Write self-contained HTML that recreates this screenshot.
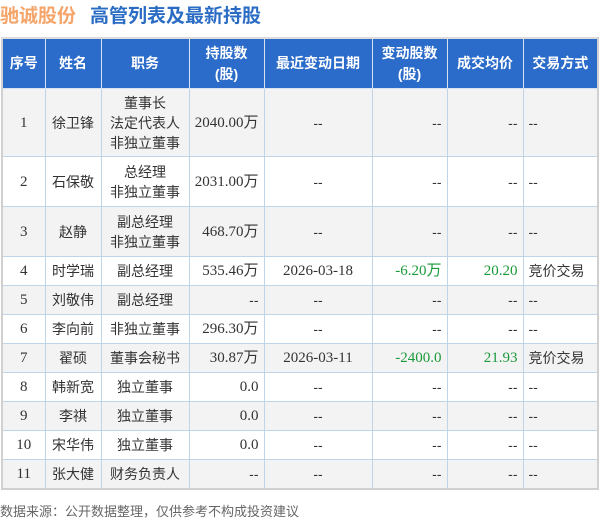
<!DOCTYPE html><html><head><meta charset="utf-8"><style>
body{margin:0;width:600px;height:519px;background:#fff;font-family:"Liberation Sans","Noto Sans CJK SC",sans-serif;position:relative;overflow:hidden}
.t1{position:absolute;left:0;top:1px;font-size:19px;font-weight:bold;color:#f5a46a}
.t2{position:absolute;left:90px;top:1px;font-size:19px;font-weight:bold;color:#2a6cc4}
table{position:absolute;left:1px;top:37px;border-collapse:collapse;border:2px solid #d0d0d0;border-top:2px solid #ddd;table-layout:fixed;font-size:14px;color:#333}
th{background:#2b6bc9;color:#fff;font-weight:bold;border:1px solid #d6e2ef;height:49px;font-size:14px;line-height:21px;padding:0}
td{border:1px solid #c0d4e8;padding:0 5px;text-align:center;height:28px;line-height:20px}
tr.g td{background:#f3f3f3}
.r{text-align:right}.l{text-align:left}.gr{color:#1a9a3a}
.s{font-family:"Liberation Serif","Noto Sans CJK SC",serif;font-size:15px}
.f{position:absolute;left:0;top:501px;font-size:13px;color:#666}
</style></head><body>
<div class="t1">驰诚股份</div><div class="t2">高管列表及最新持股</div>
<table>
<colgroup><col width="43"><col width="56"><col width="88"><col width="75"><col width="108"><col width="75"><col width="76"><col width="75"></colgroup>
<tr><th>序号</th><th>姓名</th><th>职务</th><th>持股数<br>(股)</th><th>最近变动日期</th><th>变动股数<br>(股)</th><th>成交均价</th><th>交易方式</th></tr>
<tr class="g"><td class="s" style="height:67px">1</td><td>徐卫锋</td><td style="line-height:20px">董事长<br>法定代表人<br>非独立董事</td><td class="r s">2040.00万</td><td>--</td><td class="r">--</td><td class="r">--</td><td class="l">--</td></tr>
<tr><td class="s" style="height:49px">2</td><td>石保敬</td><td>总经理<br>非独立董事</td><td class="r s">2031.00万</td><td>--</td><td class="r">--</td><td class="r">--</td><td class="l">--</td></tr>
<tr class="g"><td class="s" style="height:49px">3</td><td>赵静</td><td>副总经理<br>非独立董事</td><td class="r s">468.70万</td><td>--</td><td class="r">--</td><td class="r">--</td><td class="l">--</td></tr>
<tr><td class="s">4</td><td>时学瑞</td><td>副总经理</td><td class="r s">535.46万</td><td class="s">2026-03-18</td><td class="r s gr">-6.20万</td><td class="r s gr">20.20</td><td class="l">竞价交易</td></tr>
<tr class="g"><td class="s">5</td><td>刘敬伟</td><td>副总经理</td><td class="r">--</td><td>--</td><td class="r">--</td><td class="r">--</td><td class="l">--</td></tr>
<tr><td class="s">6</td><td>李向前</td><td>非独立董事</td><td class="r s">296.30万</td><td>--</td><td class="r">--</td><td class="r">--</td><td class="l">--</td></tr>
<tr class="g"><td class="s">7</td><td>翟硕</td><td>董事会秘书</td><td class="r s">30.87万</td><td class="s">2026-03-11</td><td class="r s gr">-2400.0</td><td class="r s gr">21.93</td><td class="l">竞价交易</td></tr>
<tr><td class="s">8</td><td>韩新宽</td><td>独立董事</td><td class="r s">0.0</td><td>--</td><td class="r">--</td><td class="r">--</td><td class="l">--</td></tr>
<tr class="g"><td class="s">9</td><td>李祺</td><td>独立董事</td><td class="r s">0.0</td><td>--</td><td class="r">--</td><td class="r">--</td><td class="l">--</td></tr>
<tr><td class="s">10</td><td>宋华伟</td><td>独立董事</td><td class="r s">0.0</td><td>--</td><td class="r">--</td><td class="r">--</td><td class="l">--</td></tr>
<tr class="g"><td class="s">11</td><td>张大健</td><td>财务负责人</td><td class="r">--</td><td>--</td><td class="r">--</td><td class="r">--</td><td class="l">--</td></tr>
</table>
<div class="f">数据来源：公开数据整理，仅供参考不构成投资建议</div>
</body></html>
